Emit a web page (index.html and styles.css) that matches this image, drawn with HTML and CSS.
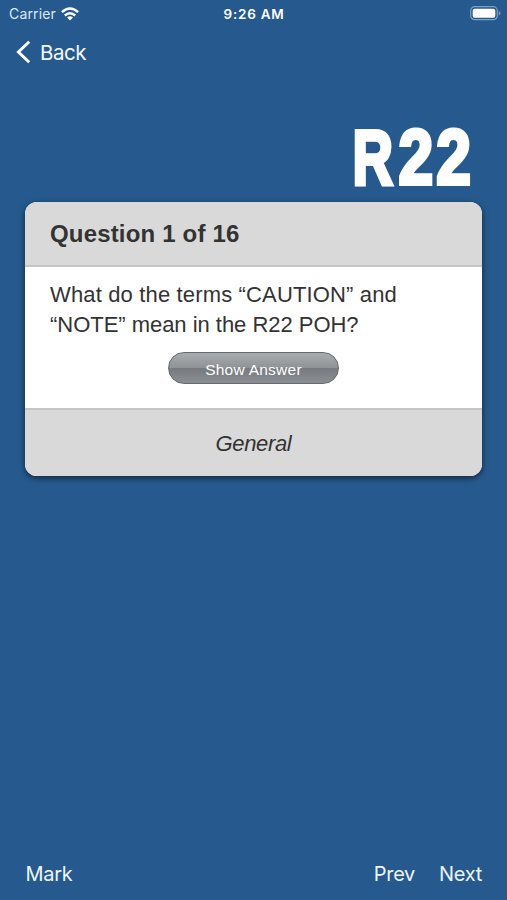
FILE: index.html
```html
<!DOCTYPE html>
<html lang="en">
<head>
<meta charset="utf-8">
<title>R22 Questions</title>
<link rel="stylesheet" href="styles.css">
</head>
<body>
<div class="screen">
  <header class="status">
    <div class="carrier"><span>Carrier</span>
      <svg class="wifi" viewBox="0 0 18 14" width="18" height="14"><g fill="none" stroke="#fff" stroke-width="2.5"><path d="M.9 5.1Q9-2.1 17.1 5.1"/><path d="M3.8 8.5Q9 3.9 14.2 8.5"/></g><path fill="#fff" d="M6.1 10.4Q9 8 11.9 10.4L9 13.5Z"/></svg>
    </div>
    <div class="time">9:26 AM</div>
    <svg class="battery" viewBox="0 0 31 15" width="31" height="15"><rect x=".7" y=".7" width="26.6" height="13" rx="4" fill="none" stroke="#7e9fc2" stroke-width="1.2"/><rect x="2.7" y="2.7" width="22.6" height="9" rx="2" fill="#fff"/><path d="M28.8 4.8Q32 7.2 28.8 9.6Z" fill="#7e9fc2"/></svg>
  </header>
  <nav class="nav">
    <svg viewBox="0 0 16 24" width="16" height="24"><path d="M14.2 1.7 3.4 12l10.8 10.3" fill="none" stroke="#fff" stroke-width="2.9"/></svg>
    <span class="back">Back</span>
  </nav>
  <h1 class="title"><span class="model"><span class="letter">R</span>22</span></h1>
  <main class="card">
    <h2 class="head">Question 1 of 16</h2>
    <section class="body">
      <p><span class="line1">What do the terms “CAUTION” and</span><br><span class="line2">“NOTE” mean in the R22 POH?</span></p>
      <button class="answer">Show Answer</button>
    </section>
    <footer class="foot"><span>General</span></footer>
  </main>
  <footer class="toolbar">
    <span class="mark">Mark</span><span class="prev">Prev</span><span class="next">Next</span>
  </footer>
</div>
</body>
</html>
```
FILE: styles.css
```css
* { box-sizing: border-box; }
body { margin: 0; background: #265a8e; }
.screen {
  width: 507px; height: 900px; display: flex; flex-direction: column;
  background: #265a8e; color: #fff; font-family: Inter, sans-serif; overflow: hidden;
}
.status {
  height: 28px; display: grid; grid-template-columns: 1fr auto 1fr; align-items: center;
  padding: 0 6px 0 9px; font-size: 14px; line-height: 28px;
}
.carrier { display: flex; align-items: center; gap: 5px; color: #dde9f5; letter-spacing: .15px; }
.wifi { margin-top: -1px; }
.time { font-weight: 600; font-size: 13.5px; letter-spacing: .75px; margin-left: -2px; }
.battery { justify-self: end; margin-top: -1px; }
.nav { height: 50px; display: flex; align-items: center; gap: 9px; padding: 0 0 2px 15px; }
.back { font-size: 20.5px; color: #f2f7fd; letter-spacing: -.5px; }
.title {
  margin: 0; height: 124px; display: flex; justify-content: flex-end; padding: 37px 33px 0 0;
  font: bold 77px/84px "Liberation Sans", sans-serif;
}
.model { transform: scaleX(.81); transform-origin: right; -webkit-text-stroke: 4px #fff; letter-spacing: 4px; }
.letter { display: inline-block; transform: scaleX(.9); transform-origin: 28px 50%; }
.card {
  flex: none; height: 274px; margin: 0 25px; border-radius: 12px; display: flex; flex-direction: column;
  overflow: hidden; background: #fff; color: #333; font-family: "Liberation Sans", sans-serif;
  box-shadow: 0 2px 6px rgba(0, 0, 0, .6);
}
.head {
  margin: 0; height: 65px; padding: 0 25px; background: #d9d9d9; border-bottom: 2px solid #c6c6c6;
  font-size: 24px; line-height: 64px; letter-spacing: .17px;
}
.body { height: 141px; padding: 13px 25px 0; display: flex; flex-direction: column; }
.body p { margin: 0; font-size: 22px; line-height: 30px; white-space: nowrap; }
.line1 { letter-spacing: .15px; }
.line2 { letter-spacing: -.03px; }
.answer {
  width: 171px; height: 32px; margin: 12px 0 0 118px; border: 1px solid #65696d; border-radius: 16px; padding: 3px 0 0;
  background: linear-gradient(#a9acaf 0, #8f9396 50%, #777b7f 51%, #8b8f93 100%);
  color: #fff; font: 15.5px "Liberation Sans", sans-serif; letter-spacing: .25px;
}
.foot {
  height: 68px; background: #d9d9d9; border-top: 2px solid #c6c6c6; text-align: center;
  font-size: 22px; font-style: italic; line-height: 68px; letter-spacing: -.35px;
}
.toolbar {
  margin-top: auto; height: 53px; display: flex; align-items: center; padding: 0 25px; font-size: 20px; color: #edf4fc;
  letter-spacing: -.3px;
}
.mark { margin-left: .5px; }
.prev { margin-left: auto; margin-right: 24px; }
```
